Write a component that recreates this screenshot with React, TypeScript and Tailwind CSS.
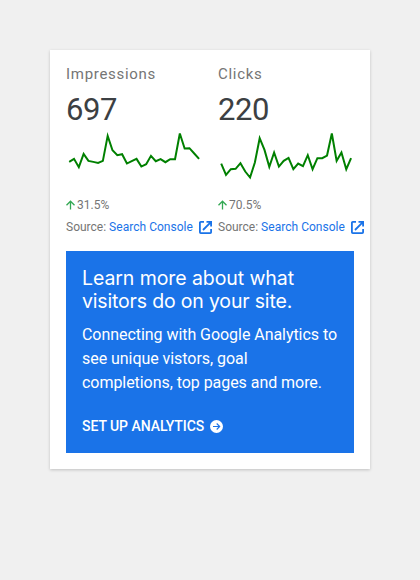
type Metric = {
  label: string;
  value: string;
  change: string;
  trend: number[];
};

const METRICS: Metric[] = [
  {
    label: "Impressions",
    value: "697",
    change: "31.5%",
    trend: [110, 101, 126, 86, 107, 110, 113, 107, 32, 75, 90, 87, 115, 108, 101, 124, 117, 92, 108, 102, 111, 102, 102, 25, 70, 69, 85, 101],
  },
  {
    label: "Clicks",
    value: "220",
    change: "70.5%",
    trend: [115, 149, 132, 131, 114, 139, 157, 112, 39, 74, 125, 82, 124, 107, 98, 132, 115, 123, 90, 132, 99, 99, 91, 25, 107, 82, 132, 99],
  },
];

function Sparkline({ values }: { values: number[] }) {
  const points = values
    .map((v, i) => `${(3.2 + i * 4.81).toFixed(2)},${(v / 3 + 0.2).toFixed(2)}`)
    .join(" ");
  return (
    <svg className="block h-[70px] w-[136px]" viewBox="0 0 136 70" fill="none">
      <polyline points={points} stroke="#008000" strokeWidth="2" />
    </svg>
  );
}

function MetricColumn({ metric }: { metric: Metric }) {
  return (
    <div className="w-[152px] shrink-0">
      <h3 className="h-6 text-[15px] leading-6 tracking-[0.7px] text-[#757575]">{metric.label}</h3>
      <div className="mt-1 h-[35px] pt-0.5 text-[31px] leading-[36px] text-[#3c4043] tracking-[-0.4px]">{metric.value}</div>
      <Sparkline values={metric.trend} />
      <div className="flex h-5 items-center text-xs text-[#757575]">
        <svg className="mr-px h-[10px] w-[10px]" viewBox="0 0 10 10" fill="none" stroke="#34a853" strokeWidth="1.3">
          <path d="M4.5 9.5V1.2M0.5 5.2L4.5 1.2L8.5 5.2" />
        </svg>
        <span className="tracking-[0.05px]">{metric.change}</span>
      </div>
      <div className="mt-0.5 flex h-5 items-center whitespace-nowrap text-xs text-[#757575]">
        <span>Source:&nbsp;</span>
        <a className="tracking-[0.03px] text-[#1a73e8]">Search Console</a>
        <svg className="ml-[6px] h-[13px] w-[13px] shrink-0" viewBox="0 0 13 13" fill="none" stroke="#1a73e8" strokeWidth="1.8">
          <path d="M5 0.9H1.8a0.9 0.9 0 0 0-0.9 0.9V11.2a0.9 0.9 0 0 0 0.9 0.9H11.2a0.9 0.9 0 0 0 0.9-0.9V8" />
          <path d="M7.5 0.9H12.1V5.5M12.1 0.9L4 9" />
        </svg>
      </div>
    </div>
  );
}

export default function App() {
  return (
    <div className="h-[580px] w-[420px] bg-[#f0f0f0] p-[50px] font-['Roboto',sans-serif]">
      <section className="h-[419px] w-[320px] bg-white px-4 pt-3 shadow-[0_1px_3px_rgba(0,0,0,0.2)]">
        <div className="flex">
          {METRICS.map((m) => (
            <MetricColumn key={m.label} metric={m} />
          ))}
        </div>
        <div className="mt-[14px] h-[202px] bg-[#1a73e8] px-4 pt-4 text-white">
          <h2 className="whitespace-nowrap font-['Inter',sans-serif] text-[19.5px] leading-[23px]">
            <span className="block tracking-[-0.08px]">Learn more about what</span>
            <span className="block tracking-[-0.17px]">visitors do on your site.</span>
          </h2>
          <p className="mt-[10px] whitespace-nowrap text-base leading-6 tracking-[-0.05px]">
            Connecting with Google Analytics to
            <br />
            see unique vistors, goal
            <br />
            completions, top pages and more.
          </p>
          <a className="mt-[19px] flex h-6 items-center text-sm font-medium tracking-[-0.05px]">
            SET UP ANALYTICS
            <svg className="ml-[6px] h-[13px] w-[13px]" viewBox="0 0 13 13" fill="none">
              <circle cx="6.5" cy="6.5" r="6.5" fill="#fff" />
              <path d="M3 6.5H9.5M6.7 3.5L9.7 6.5L6.7 9.5" stroke="#1a73e8" strokeWidth="1.1" />
            </svg>
          </a>
        </div>
      </section>
    </div>
  );
}
